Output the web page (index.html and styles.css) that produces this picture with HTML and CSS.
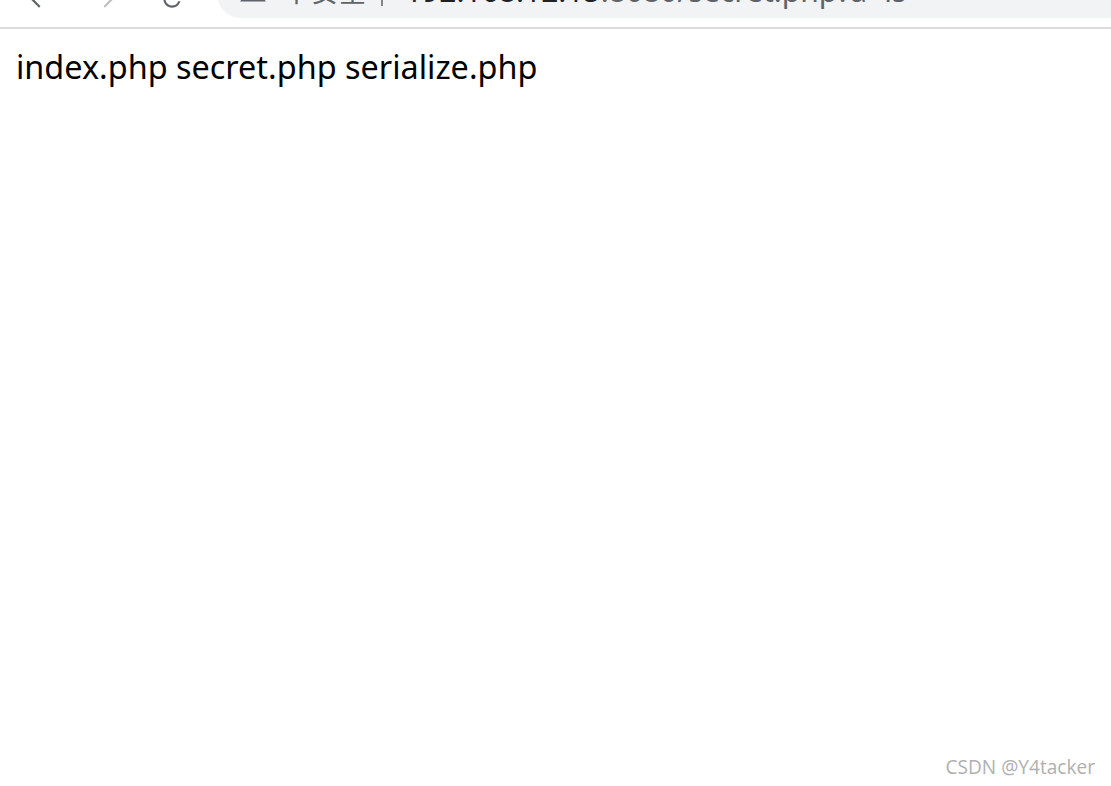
FILE: index.html
```html
<!DOCTYPE html>
<html lang="zh">
<head>
<meta charset="utf-8">
<title>secret.php</title>
<link rel="stylesheet" href="styles.css">
</head>
<body>
<header class="toolbar">
  <div class="nav">
    <svg class="nav-icon back" width="26" height="26" viewBox="0 0 24 24"><path d="M20 11H7.83l5.59-5.59L12 4l-8 8 8 8 1.41-1.41L7.83 13H20v-2z" fill="#5f6368"/></svg>
    <svg class="nav-icon fwd" width="26" height="26" viewBox="0 0 24 24"><path d="M12 4l-1.41 1.41L16.17 11H4v2h12.17l-5.58 5.59L12 20l8-8z" fill="#bdc1c6"/></svg>
    <svg class="nav-icon reload" width="26" height="26" viewBox="0 0 24 24"><path d="M17.65 6.35A7.958 7.958 0 0 0 12 4c-4.42 0-7.990 3.58-7.990 8s3.57 8 7.990 8c3.730 0 6.840-2.550 7.730-6h-2.080A5.990 5.990 0 0 1 12 18c-3.310 0-6-2.690-6-6s2.690-6 6-6c1.660 0 3.140.690 4.220 1.780L13 11h7V4l-2.350 2.350z" fill="#5f6368"/></svg>
  </div>
  <div class="omnibox">
    <svg class="warn" width="28" height="28" viewBox="0 0 24 24"><path d="M1 21h22L12 2 1 21zm12-3h-2v-2h2v2zm0-4h-2v-4h2v4z" fill="#5f6368"/></svg>
    <span class="insecure">不安全</span>
    <span class="sep"></span>
    <span class="url"><span class="host">192.168.12.15</span>:8080/secret.php?a=ls</span>
  </div>
</header>
<main class="content">
  <p class="listing">index.php secret.php serialize.php</p>
</main>
<div class="watermark">CSDN @Y4tacker</div>
</body>
</html>
```

FILE: styles.css
```css
html, body {
  margin: 0;
  padding: 0;
  background: #ffffff;
}

body {
  width: 1111px;
  height: 786px;
  overflow: hidden;
  position: relative;
  font-family: "Noto Sans", "Open Sans", sans-serif;
}

.toolbar {
  height: 27px;
  border-bottom: 2px solid #dadce0;
  overflow: hidden;
  display: flex;
  align-items: flex-end;
  background: #ffffff;
}

.nav {
  display: flex;
  align-items: center;
  width: 217px;
  flex: none;
  height: 44px;
  margin-bottom: 6px;
}

.nav-icon {
  flex: none;
}

.back { margin-left: 26px; }
.fwd { margin-left: 40px; }
.reload { margin-left: 41px; }

.omnibox {
  flex: 1;
  height: 40px;
  margin-bottom: 9px;
  padding-bottom: 7px;
  background: #f1f3f4;
  border-radius: 0 0 0 24px;
  display: flex;
  align-items: center;
  padding-left: 22px;
  font-family: "Noto Sans", "Noto Sans CJK SC", sans-serif;
  font-size: 30px;
  line-height: 30px;
  color: #5f6368;
  white-space: nowrap;
}

.warn {
  flex: none;
}

.insecure {
  margin-left: 16px;
  font-family: "Noto Sans CJK SC", sans-serif;
  font-size: 27px;
  letter-spacing: 1px;
}

.sep {
  width: 2px;
  height: 30px;
  background: #80868b;
  margin: 0 22px 0 14px;
  flex: none;
}

.url .host {
  color: #202124;
}

.content {
  padding: 0 16px;
}

.listing {
  margin: 17px 0 0;
  font-size: 32.4px;
  line-height: 40px;
  color: #000000;
}

.watermark {
  position: absolute;
  right: 16px;
  bottom: 6px;
  font-family: "Open Sans", "Noto Sans", sans-serif;
  font-size: 19.1px;
  color: #b0b0b0;
}
```
